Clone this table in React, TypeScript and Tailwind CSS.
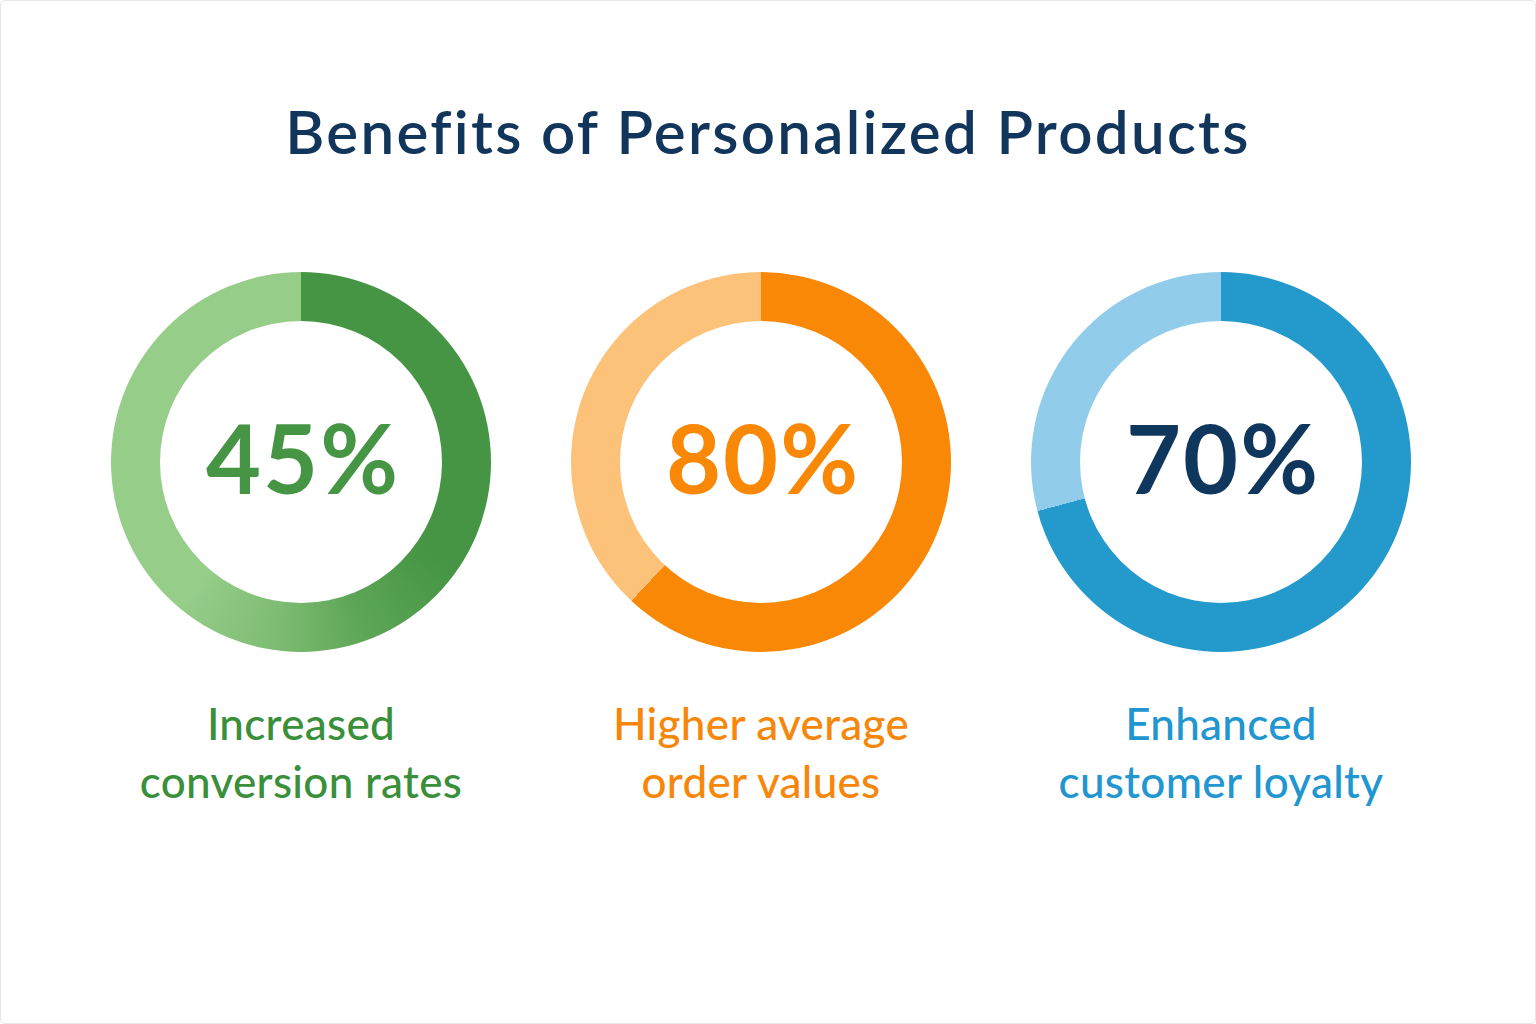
import React from 'react';

type Stat = {
  value: string;
  ring: string;
  valueColor: string;
  labelColor: string;
  lines: [string, string];
};

const stats: Stat[] = [
  {
    value: '45%',
    ring: 'bg-[conic-gradient(#459544_0deg,#459544_125deg,#5ea657_160deg,#7fbd74_190deg,#95cd89_220deg,#95cd89_360deg)]',
    valueColor: 'text-[#459544]',
    labelColor: 'text-[#3a8f3a]',
    lines: ['Increased', 'conversion rates'],
  },
  {
    value: '80%',
    ring: 'bg-[conic-gradient(#f88805_0deg,#f88805_223deg,#fdc27a_223deg,#fdc27a_360deg)]',
    valueColor: 'text-[#f88805]',
    labelColor: 'text-[#f7870b]',
    lines: ['Higher average', 'order values'],
  },
  {
    value: '70%',
    ring: 'bg-[conic-gradient(#2499cc_0deg,#2499cc_255deg,#91cdeb_255deg,#91cdeb_360deg)]',
    valueColor: 'text-[#0f365c]',
    labelColor: 'text-[#2196d0]',
    lines: ['Enhanced', 'customer loyalty'],
  },
];

function Donut({ stat }: { stat: Stat }) {
  return (
    <div className="flex w-[460px] flex-col items-center">
      <div className={`flex h-[380px] w-[380px] items-center justify-center rounded-full ${stat.ring}`}>
        <div className="flex h-[282px] w-[282px] items-center justify-center rounded-full bg-white">
          <span className={`-mt-[10px] ml-[4px] text-[95px] font-bold leading-none tracking-[2px] ${stat.valueColor}`}>
            {stat.value}
          </span>
        </div>
      </div>
      <div className={`mt-[42px] flex flex-col items-center text-[44px] font-medium leading-[58px] tracking-[0.3px] ${stat.labelColor}`}>
        <span>{stat.lines[0]}</span>
        <span>{stat.lines[1]}</span>
      </div>
    </div>
  );
}

export default function App() {
  return (
    <div
      className="h-[1024px] w-full overflow-hidden rounded-[6px] border border-[#e6e6e6] bg-white"
      style={{ fontFamily: 'Lato, "Open Sans", sans-serif' }}
    >
      <h1 className="pt-[94px] text-center text-[60px] font-semibold leading-[72px] tracking-[2.3px] text-[#12355b]">
        Benefits of Personalized Products
      </h1>
      <div className="mt-[105px] flex pl-[70px]">
        {stats.map((s) => (
          <Donut key={s.value} stat={s} />
        ))}
      </div>
    </div>
  );
}
